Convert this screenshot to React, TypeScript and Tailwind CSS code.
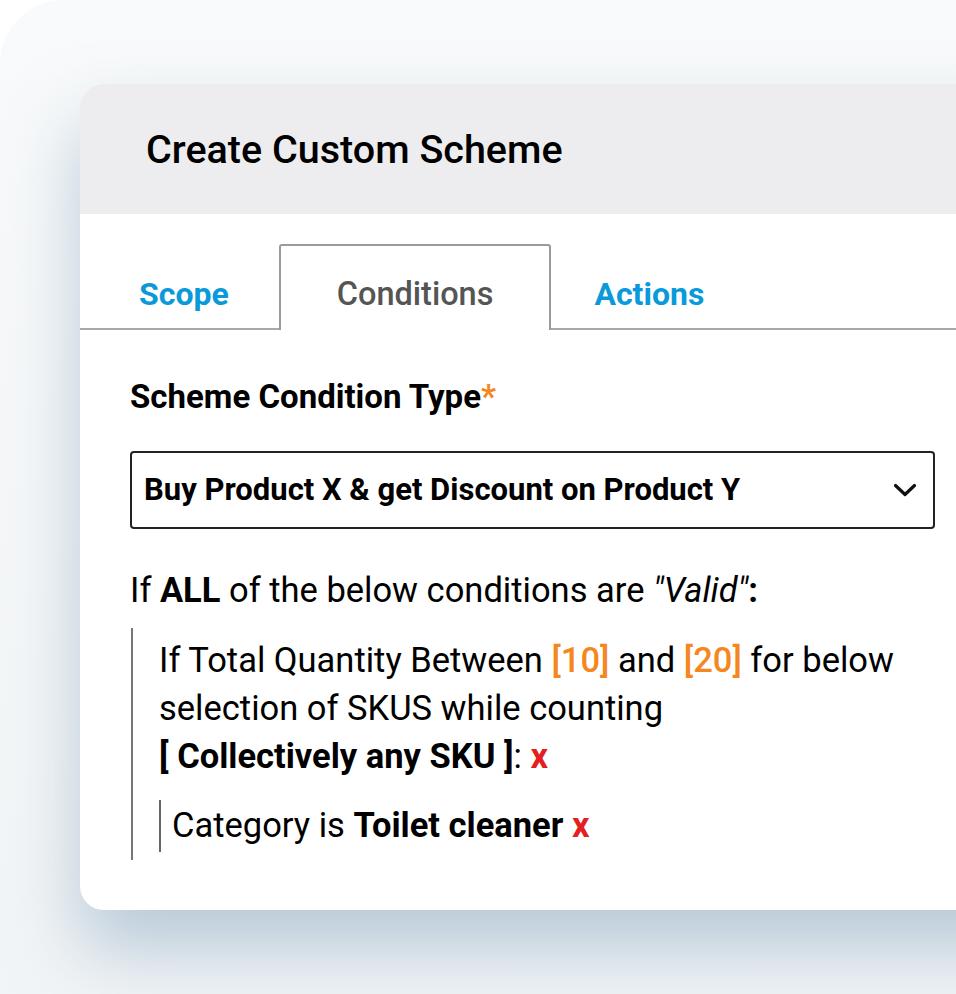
export default function App() {
  return (
    <div className="w-[956px] h-[994px] overflow-hidden bg-white font-['Roboto',sans-serif]">
      <div className="relative w-[1100px] h-[1100px] rounded-tl-[64px] bg-gradient-to-b from-[#f8fafb] to-[#f1f4f6] pt-[84px] pl-[80px]">
        {/* Card */}
        <div className="w-[1000px] rounded-[24px] bg-white overflow-hidden shadow-[0_40px_70px_rgba(130,160,185,0.5)]">
          {/* Header */}
          <div className="h-[130px] bg-[#ededef] flex items-center pl-[66px] pt-[2px]">
            <h1 className="text-[39.5px] font-medium text-black">Create Custom Scheme</h1>
          </div>

          {/* Tabs */}
          <div className="pt-[31px]">
            <div className="flex items-end h-[85px] border-b-2 border-[#a8a8a8]">
              <div className="h-full flex items-center pt-[14px] pl-[59px] pr-[50px] text-[32px] font-bold text-[#0a9ad9]">
                Scope
              </div>
              <div className="h-[86px] -mb-[2px] flex items-center pt-[12px] px-[56px] bg-white border-2 border-b-0 border-[#9a9a9a] rounded-t-[3px] text-[32.5px] font-medium text-[#555555]">
                Conditions
              </div>
              <div className="h-full flex items-center pt-[14px] pl-[43px] text-[32px] font-bold text-[#0a9ad9]">
                Actions
              </div>
            </div>
          </div>

          {/* Body */}
          <div className="pl-[50px] pr-[65px] pt-[49px] pb-[50px] text-black">
            <div className="text-[33px] font-bold leading-[36px]">
              Scheme Condition Type<span className="text-[#f5871f]">*</span>
            </div>

            <div className="mt-[36px] w-[805px] h-[78px] border-2 border-[#222] rounded-[4px] flex items-center justify-between pl-[12px] pr-[16px]">
              <span className="text-[31px] font-bold">Buy Product X &amp; get Discount on Product Y</span>
              <svg width="24" height="16" viewBox="0 0 24 16" fill="none">
                <path d="M2.5 3.5 L12 12.5 L21.5 3.5" stroke="#111" strokeWidth="3.2" strokeLinecap="round" strokeLinejoin="round" />
              </svg>
            </div>

            <p className="mt-[41px] text-[34.5px] leading-[40px]">
              If <b>ALL</b> of the below conditions are <i>"Valid"</i><b>:</b>
            </p>

            <div className="mt-[18px] ml-px border-l-2 border-[#777] pl-[26px] pt-[8px] pb-[8px]">
              <p className="text-[34.5px] leading-[48px] w-[770px]">
                If Total Quantity Between <span className="text-[#f5871f] font-medium">[10]</span> and{" "}
                <span className="text-[#f5871f] font-medium">[20]</span> for below selection of SKUS while counting
                <br />
                <b>[ Collectively any SKU ]</b>: <b className="text-[#e3201f]">x</b>
              </p>

              <div className="mt-[20px] h-[52px] border-l-2 border-[#666] pl-[11px] flex items-center">
                <span className="text-[34.5px]">
                  Category is <b>Toilet cleaner</b> <b className="text-[#e3201f]">x</b>
                </span>
              </div>
            </div>
          </div>
        </div>
      </div>
    </div>
  );
}
